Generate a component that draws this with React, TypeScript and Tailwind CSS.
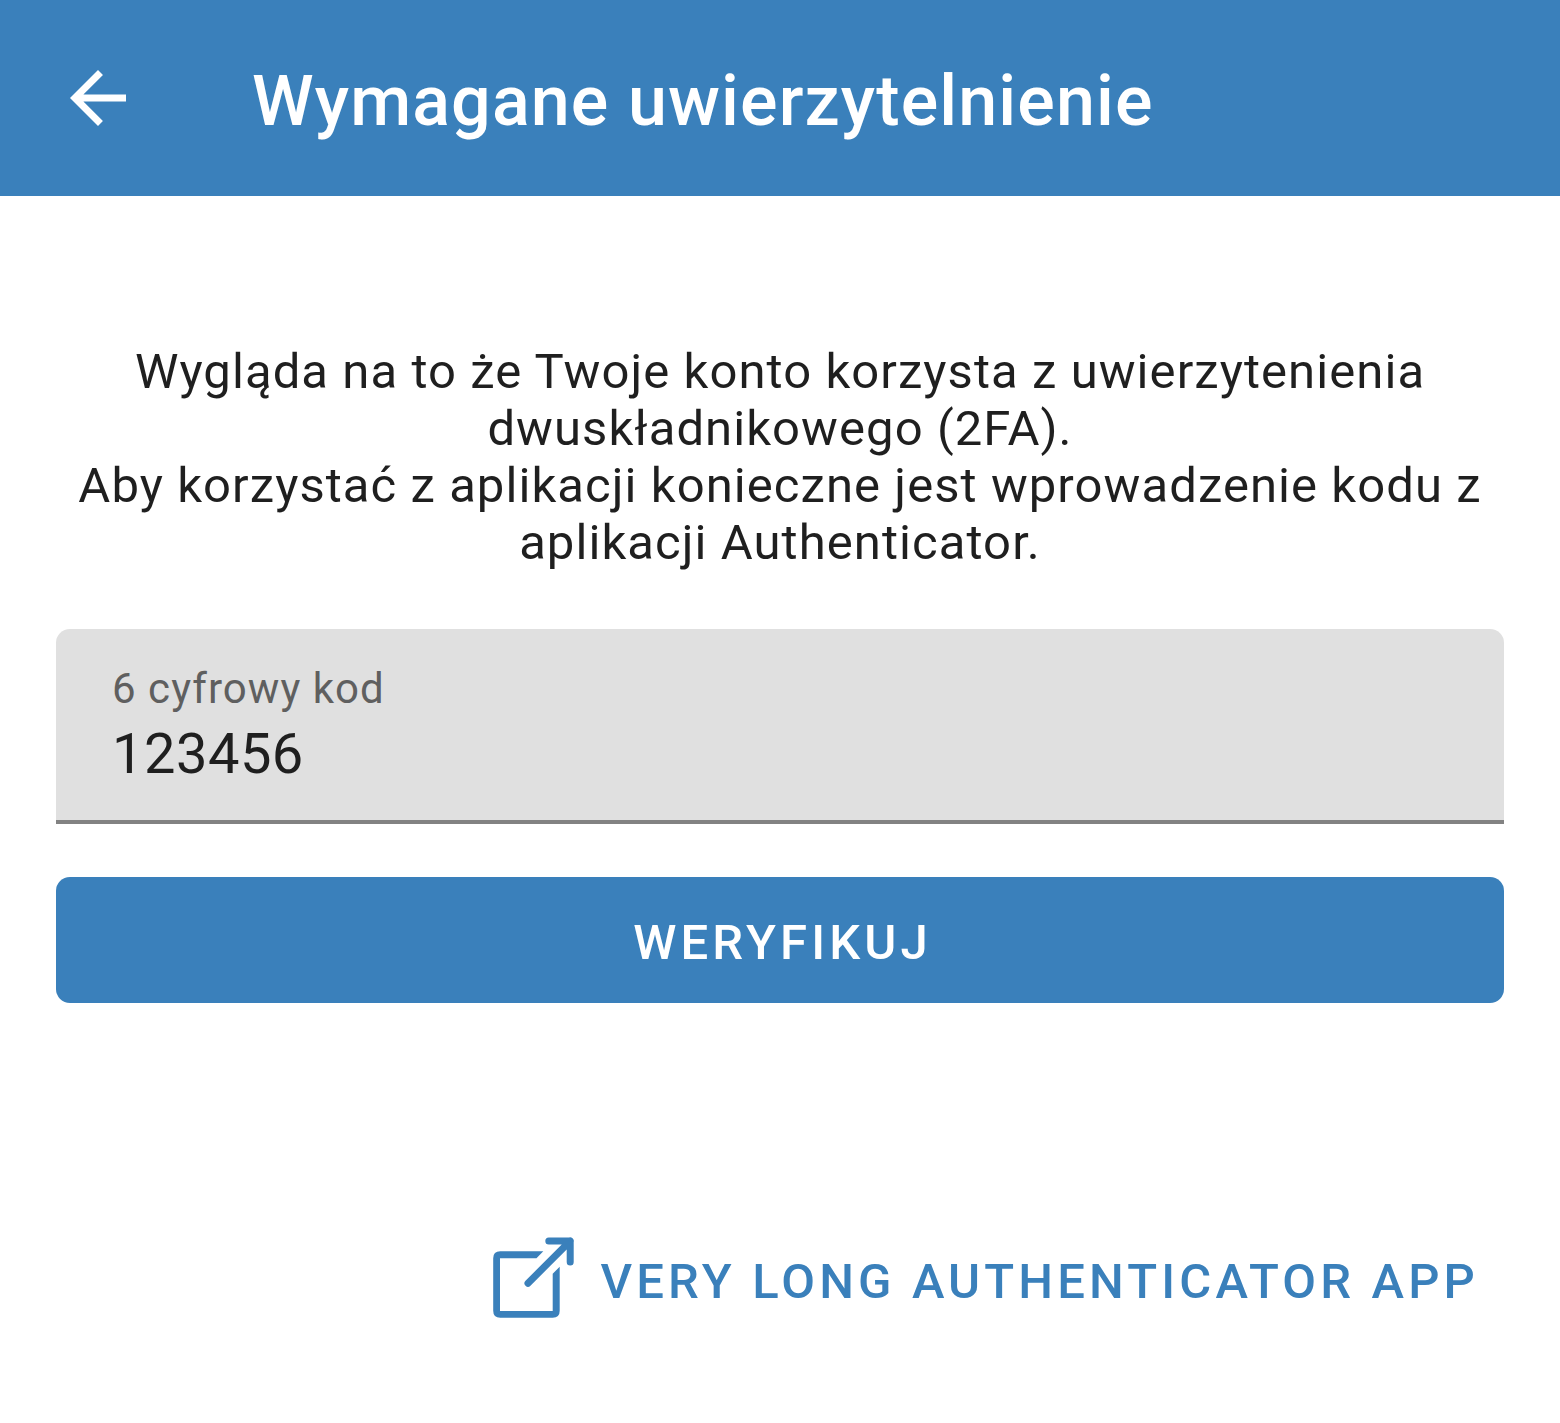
export default function App() {
  return (
    <div className="flex h-[1423px] w-[1560px] flex-col bg-white font-[Roboto,sans-serif] text-[#1f1f1f]">
      <header className="flex h-[196px] shrink-0 items-center bg-[#3a80bb] pl-[56px] text-white">
        <svg className="size-[84px] shrink-0" viewBox="0 0 24 24" fill="currentColor">
          <path d="M20 11H7.83l5.59-5.59L12 4l-8 8 8 8 1.41-1.41L7.83 13H20v-2z" />
        </svg>
        <h1 className="ml-[112px] mt-[6px] whitespace-nowrap text-[70px] leading-[82px] font-medium tracking-[1.12px]">
          Wymagane uwierzytelnienie
        </h1>
      </header>
      <main className="flex flex-col px-[56px] pt-[147px]">
        <p className="whitespace-nowrap text-center text-[49px] leading-[57px] tracking-[1.07px]">
          Wygląda na to że Twoje konto korzysta z uwierzytenienia
          <br />
          dwuskładnikowego (2FA).
          <br />
          Aby korzystać z aplikacji konieczne jest wprowadzenie kodu z
          <br />
          aplikacji Authenticator.
        </p>
        <div className="mt-[58px] flex h-[195px] flex-col justify-between rounded-t-[14px] bg-[#e0e0e0]">
          <div className="px-[56px] pt-[35px]">
            <div className="text-[42px] leading-[49px] tracking-[1.04px] text-[#5f5f5f]">6 cyfrowy kod</div>
            <div className="mt-[8px] text-[56px] leading-[66px] tracking-[0.5px]">123456</div>
          </div>
          <div className="h-1 bg-[#828282]" />
        </div>
        <button className="mt-[53px] h-[126px] rounded-[14px] bg-[#3a80bb] pt-[5px] pl-[5px] text-[49px] leading-[57px] font-medium tracking-[4.13px] text-white">
          WERYFIKUJ
        </button>
        <button className="mt-[234px] flex items-center self-end pr-[25px] text-[#3a80bb]">
          <svg className="size-[84px]" viewBox="0 0 84 84">
            <path
              fill="currentColor"
              d="M51.3 14.3H8.2Q1.2 14.3 1.2 21.3V73.7Q1.2 80.7 8.2 80.7H60.7Q67.7 80.7 67.7 73.7V29.7L60.7 36.7V73.9H8V21.3H44.5Z"
            />
            <path
              d="M56.8 4H78.2V25M78.2 4L36 46.2"
              fill="none"
              stroke="currentColor"
              strokeWidth="7"
              strokeLinecap="round"
              strokeLinejoin="round"
            />
          </svg>
          <span className="ml-[24px] mt-[5px] whitespace-nowrap text-[49px] leading-[57px] font-medium tracking-[4.14px]">
            VERY LONG AUTHENTICATOR APP
          </span>
        </button>
      </main>
    </div>
  );
}
